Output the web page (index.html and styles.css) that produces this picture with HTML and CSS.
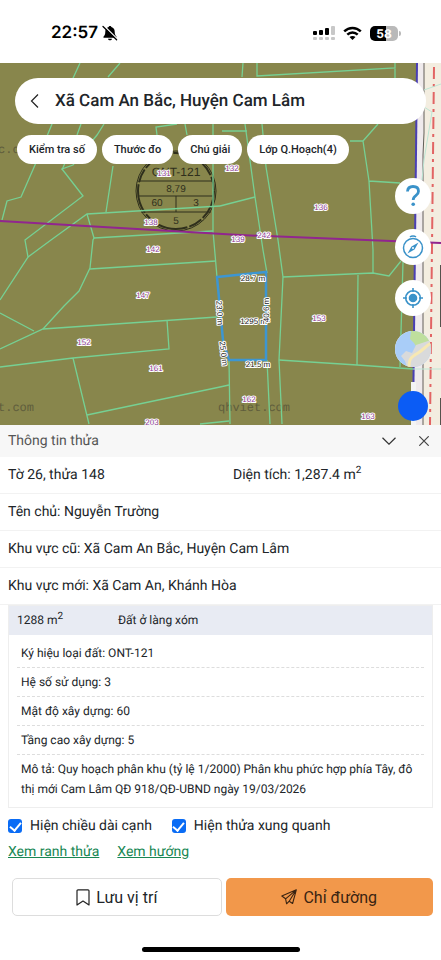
FILE: index.html
```html
<!DOCTYPE html>
<html lang="vi">
  <head>
    <meta charset="UTF-8" />
    <meta name="viewport" content="width=device-width, initial-scale=1.0" />
    <title>Thông tin thửa</title>
    <link rel="stylesheet" href="styles.css">
  </head>
  <body>
    <header class="status-bar">
      <div class="status-left">
        <span class="clock">22:57</span>
        <svg class="bell" width="16" height="16" viewBox="0 0 16 16">
          <path d="M8 1c-.8 0-1.300.5-1.400 1.100C4.400 2.700 3.300 4.500 3.300 6.800c0 2.600-.8 3.700-1.700 4.700-.5.600-.2 1.300.5 1.300h11.800c.7 0 1-.7.500-1.300-.9-1-1.700-2.100-1.700-4.700 0-2.300-1.100-4.100-3.300-4.700C9.300 1.500 8.800 1 8 1zM6 13.800h4c-.2 1-1 1.500-2 1.500s-1.800-.5-2-1.500z" />
          <path d="M2.500 1.200l13 13" stroke="#fff" stroke-width="1.500" />
          <path d="M1 1.500l13.600 13.300" stroke="#000" stroke-width="1.300" stroke-linecap="round" />
        </svg>
      </div>
      <div class="status-right">
        <svg width="22" height="16" viewBox="0 0 22 16">
          <g fill="#000">
            <rect x="0" y="6" width="4" height="4" rx="1" />
            <rect x="6" y="5" width="4" height="5" rx="1" />
            <rect x="12" y="3" width="4" height="7" rx="1" />
          </g>
          <g fill="#c8c8c8">
            <rect x="18" y="1" width="4" height="9" rx="1" />
            <rect x="0" y="12" width="4" height="3" rx="1" />
            <rect x="6" y="12" width="4" height="3" rx="1" />
            <rect x="12" y="12" width="4" height="3" rx="1" />
            <rect x="18" y="12" width="4" height="3" rx="1" />
          </g>
        </svg>
        <svg width="19" height="15" viewBox="0 0 19 15">
          <g fill="none" stroke="#000" stroke-width="2.500">
            <path d="M1.200 5.400C6 .8 13 .8 17.800 5.400" />
            <path d="M4.300 8.700c3-2.900 7.400-2.900 10.400 0" />
          </g>
          <path d="M9.500 14l-3-3c1.700-1.500 4.300-1.500 6 0z" />
        </svg>
        <div class="battery"><span>58</span></div>
      </div>
    </header>

    <main class="map">
      <svg class="map-canvas" viewBox="0 63 441 362" preserveAspectRatio="xMaxYMin slice">
        <rect x="0" y="63" width="441" height="362" fill="#f3ede0" />
        <polygon points="417,63 424,63 423,425 413,425" fill="#efeaec" />
        <polygon points="0,63 417,63 413,425 0,425" fill="#88864c" />

        <!-- 도로 -->
        <path d="M424 63v70l-1 22v270" stroke="#625f58" stroke-width="1" fill="none" />
        <path d="M441 265v62M441 398v27" stroke="#55524c" stroke-width="2" />
        <path d="M417 63L413 425" stroke="#4a3fb4" stroke-width="2" />
        <path d="M434 67L430 425" stroke="#e26464" stroke-width="2" stroke-dasharray="12 5 3 5" />
        <path d="M441 84l-17 6M424 107l8 5-8 48-2 20M413 369h28" stroke="#bde6d5" stroke-width="1" fill="none" />

        <!-- 워터마크 -->
        <g class="watermark">
          <text x="-2" y="153">c.com</text>
          <text x="-2" y="411">t.com</text>
          <text x="218" y="411">qhviet.com</text>
        </g>

        <!-- 토지 기호 -->
        <g class="zone">
          <circle cx="176" cy="191" r="40" stroke-width="1" />
          <circle cx="176" cy="191" r="38" stroke-width="2" stroke-dasharray="30 2 14 2" />
          <path d="M140 181h73M138 196h76M141 212h70M176 196v16" />
          <text x="176" y="176" class="zone-name">ONT-121</text>
          <text x="176" y="192">8,79</text>
          <text x="157" y="206">60</text>
          <text x="196" y="206">3</text>
          <text x="176" y="224">5</text>
        </g>

        <!-- 필지 경계 -->
        <g class="parcels">
          <path d="M80 63L52 124 35 165 21 197 7 201 2 220" />
          <path d="M120 63L108 77M81 124l-4 11-15 35" />
          <path d="M104 124l-7 11-24 30-11 4 21 27-58 44 3 17-28 43" />
          <path d="M28 257l23-17 36-26 133-8" />
          <path d="M113 166l-7 46M87 214l7 24-1 2-3 28-11 23-15 15-21 23" />
          <path d="M94 238l119-7M90 269l126-8" />
          <path d="M0 313l34 18M0 349l43-20 174-12" />
          <path d="M167 320l2 29-96 9-73 9M73 358l16 66M87 415l133-28 9-2M200 424l29-3" />
          <path d="M157 135l-1-8 21-3M185 124l2 11M213 124v107l4 46" />
          <path d="M243 63l-1 14M245 124l10 73 8 53 4 23M222 131h25" />
          <path d="M257 63v13l138-8V63M395 68v10" />
          <path d="M262 124l4 43 12 73 5 37-4 83 3 64" />
          <path d="M378 124l-15 17h-13M363 141l6 40 4 69v23M369 181l31 2" />
          <path d="M220 206l35-9M283 277l90-4 16 3 12-15M358 275l-1 90" />
          <path d="M279 360l78 5 56 4M403 262l-3 105M267 360l3 64M229 360l1 64" />
        </g>

        <path d="M0 221L240 235 441 243" stroke="#91258f" stroke-width="2" fill="none" />
        <path d="M217 277l49-5v88h-37l-6-20z" stroke="#3d96d2" stroke-width="2.500" fill="none" />

        <g class="numbers">
          <text x="164" y="176">131</text>
          <text x="232" y="171">132</text>
          <text x="321" y="210">136</text>
          <text x="151" y="225">138</text>
          <text x="238" y="242">139</text>
          <text x="264" y="238">242</text>
          <text x="153" y="252">142</text>
          <text x="143" y="298">147</text>
          <text x="84" y="345">152</text>
          <text x="156" y="371">161</text>
          <text x="319" y="321">153</text>
          <text x="249" y="402">162</text>
          <text x="368" y="419">163</text>
          <text x="152" y="425">203</text>
        </g>
        <g class="lengths">
          <text x="253" y="281">28.7 m</text>
          <text x="255" y="324">1295 m²</text>
          <text x="258" y="367">21.5 m</text>
          <text transform="translate(269 310) rotate(-90)">40.6 m</text>
          <text transform="translate(217 313) rotate(87)">23.0 m</text>
          <text transform="translate(221 354) rotate(83)">25.0 m</text>
        </g>
      </svg>

      <div class="map-top">
        <div class="search">
          <button class="back" aria-label="Quay lại">
            <svg width="10" height="16" viewBox="0 0 10 16"><path d="M8 1.500L1.500 8 8 14.500" fill="none" stroke="#222" stroke-width="1.200" /></svg>
          </button>
          <h1>Xã Cam An Bắc, Huyện Cam Lâm</h1>
        </div>
        <nav class="chips">
          <button>Kiểm tra số</button>
          <button>Thước đo</button>
          <button>Chú giải</button>
          <button>Lớp Q.Hoạch(4)</button>
        </nav>
      </div>

      <div class="tools">
        <button class="tool" aria-label="Trợ giúp">
          <svg width="20" height="24" viewBox="0 0 20 24"><path d="M4.500 7.500c.2-3.300 2.500-5 5.500-5 3.300 0 5.500 1.800 5.500 4.700 0 2.300-1.200 3.400-2.700 4.500C11 12.900 10.200 13.700 10.200 16" fill="none" stroke="#3a92c9" stroke-width="2.800" /><circle cx="10.200" cy="20.300" r="1.800" fill="#3a92c9" /></svg>
        </button>
        <button class="tool" aria-label="La bàn">
          <svg width="22" height="24" viewBox="0 0 22 24"><g fill="none" stroke="#3a92c9"><circle cx="11" cy="13" r="9.500" stroke-width="1.500" /><path d="M8 2c1.500-1.300 4.500-1.300 6 0" stroke-width="1.500" /></g><path d="M16.500 7.500l-4 7-7 4 4-7z" fill="#3a92c9" /><circle cx="11" cy="13" r="1" fill="#fff" /></svg>
        </button>
        <button class="tool" aria-label="Vị trí của tôi">
          <svg width="20" height="20" viewBox="0 0 20 20"><g fill="none" stroke="#3a92c9" stroke-width="1.600"><circle cx="10" cy="10" r="7.300" /><path d="M10 0v4M10 16v4M0 10h4M16 10h4" /></g><circle cx="10" cy="10" r="4.300" fill="#3a92c9" /></svg>
        </button>
        <button class="tool layers" aria-label="Lớp bản đồ">
          <svg width="36" height="36" viewBox="0 0 36 36">
            <rect width="36" height="36" fill="#a9cdf8" />
            <path d="M16 0h20v17L24 20l-5-8-4-4z" fill="#bfdf9d" />
            <path d="M6 25l5-5 6 2 4-8 15-5v27H12l-2-6z" fill="#d9dadb" />
            <path d="M14 36c0-8 2-10 9-14 5-3 8-7 13-10" fill="none" stroke="#f7e8b3" stroke-width="3" />
          </svg>
        </button>
        <div class="zoom">
          <input type="range" min="0" max="100" value="30" aria-label="Độ mờ" />
        </div>
      </div>
    </main>

    <section class="sheet">
      <div class="sheet-head">
        <h2>Thông tin thửa</h2>
        <button class="icon-btn" aria-label="Thu gọn">
          <svg width="14" height="8" viewBox="0 0 14 8"><path d="M.5.8L7 7.200 13.500.8" fill="none" stroke="#333" stroke-width="1.200" /></svg>
        </button>
        <button class="icon-btn" aria-label="Đóng">
          <svg width="10" height="10" viewBox="0 0 10 10"><path d="M.3.3l9.400 9.400M9.700.3L.3 9.700" stroke="#444" stroke-width="1.200" /></svg>
        </button>
      </div>
      <div class="row split">
        <span>Tờ 26, thửa 148</span>
        <span>Diện tích: 1,287.4 m<sup>2</sup></span>
      </div>
      <div class="row">Tên chủ: Nguyễn Trường</div>
      <div class="row">Khu vực cũ: Xã Cam An Bắc, Huyện Cam Lâm</div>
      <div class="row">Khu vực mới: Xã Cam An, Khánh Hòa</div>

      <div class="card">
        <div class="card-head">
          <span>1288 m<sup>2</sup></span>
          <span>Đất ở làng xóm</span>
        </div>
        <ul class="card-list">
          <li>Ký hiệu loại đất: ONT-121</li>
          <li>Hệ số sử dụng: 3</li>
          <li>Mật độ xây dựng: 60</li>
          <li>Tầng cao xây dựng: 5</li>
          <li>Mô tả: Quy hoạch phân khu (tỷ lệ 1/2000) Phân khu phức hợp phía Tây, đô thị mới Cam Lâm QĐ 918/QĐ-UBND ngày 19/03/2026</li>
        </ul>
      </div>

      <div class="checks">
        <label><input type="checkbox" checked />Hiện chiều dài cạnh</label>
        <label><input type="checkbox" checked />Hiện thửa xung quanh</label>
      </div>
      <div class="links">
        <a href="#">Xem ranh thửa</a>
        <a href="#">Xem hướng</a>
      </div>
      <div class="actions">
        <button class="btn save">
          <svg width="14" height="17" viewBox="0 0 14 17"><path d="M1 1.800Q1 .8 2 .8h10q1 0 1 1v14.200l-6-4-6 4z" fill="none" stroke="#222" stroke-width="1.200" stroke-linejoin="round" /></svg>
          Lưu vị trí
        </button>
        <button class="btn go">
          <svg width="16" height="16" viewBox="0 0 16 16"><path d="M15.300.8L.8 7l3.800 2.800 1 5 2.600-2.600 3.400 2.300zM15.300.8L4.600 9.800M15.300.8L8.200 12.200" fill="none" stroke="#3a2412" stroke-width="1.100" stroke-linejoin="round" /></svg>
          Chỉ đường
        </button>
      </div>
      <div class="home-bar"></div>
    </section>
  </body>
</html>
```
FILE: styles.css
```css
@charset 'utf-8';
* {
  margin: 0;
  padding: 0;
  box-sizing: border-box;
}

body {
  display: flex;
  flex-direction: column;
  min-height: 100vh;
  font-family: Roboto, "Liberation Sans", sans-serif;
  font-size: 14px;
  color: #212529;
  background: #fff;
  text-rendering: geometricPrecision;
}
button {
  border: 0;
  background: #fff;
  font-family: inherit;
  color: #212529;
  cursor: pointer;
}
ul {
  list-style: none;
}
svg {
  display: block;
}
sup {
  font-size: 10px;
  line-height: 0;
}

/* status bar */
.status-bar {
  display: flex;
  justify-content: space-between;
  align-items: center;
  height: 63px;
  padding: 3px 43px 0 51px;
}
.status-left,
.status-right {
  display: flex;
  align-items: center;
}
.status-left {
  gap: 4px;
}
.status-right {
  gap: 8px;
}
.clock {
  font-family: Inter, sans-serif;
  font-size: 17px;
  font-weight: 600;
  color: #000;
}
.battery {
  position: relative;
  width: 28px;
  height: 15px;
  border-radius: 5px;
  background: linear-gradient(90deg, #000 58%, #b9b9b9 58%);
  color: #fff;
  font: 700 12px/15px Inter, sans-serif;
  text-align: center;
}
.battery::after {
  content: "";
  position: absolute;
  top: 5px;
  right: -3px;
  width: 2px;
  height: 5px;
  border-radius: 0 2px 2px 0;
  background: #b9b9b9;
}

/* map */
.map {
  position: relative;
  flex: 1;
  min-height: 360px;
  overflow: hidden;
}
.map-canvas {
  position: absolute;
  width: 100%;
  height: 100%;
}
.watermark {
  font: 12px "Liberation Mono", monospace;
  fill: #5f5d3c;
}
.zone {
  fill: none;
  stroke: #2f2f1c;
}
.zone text {
  font: 10px "Liberation Sans", sans-serif;
  fill: #2f2f1c;
  stroke: none;
  text-anchor: middle;
}
.zone .zone-name {
  font-size: 12px;
}
.parcels {
  fill: none;
  stroke: #76d093;
  stroke-width: 1.3;
}
.numbers,
.lengths {
  font: 8px "Liberation Sans", sans-serif;
  text-anchor: middle;
  paint-order: stroke;
  stroke: #fff;
  stroke-width: 2;
  stroke-linejoin: round;
}
.numbers {
  fill: #8b3a93;
}
.lengths {
  fill: #222;
}

.map-top {
  position: relative;
  padding: 15px 15px 0;
}
.search {
  display: flex;
  align-items: center;
  height: 46px;
  padding-left: 15px;
  border-radius: 23px;
  background: #fff;
}
.back {
  display: flex;
  width: 25px;
}
.search h1 {
  font-size: 17px;
  font-weight: 500;
}
.chips {
  display: flex;
  gap: 5px;
  padding: 11px 2px 0;
}
.chips button {
  height: 29px;
  padding: 0 12px;
  border-radius: 15px;
  font-size: 11px;
  font-weight: 500;
  white-space: nowrap;
}

.tools {
  position: absolute;
  top: 115px;
  right: 10px;
  display: flex;
  flex-direction: column;
  gap: 15px;
}
.tool {
  display: flex;
  align-items: center;
  justify-content: center;
  width: 36px;
  height: 36px;
  border-radius: 50%;
  overflow: hidden;
}
.zoom {
  display: flex;
  justify-content: center;
}
.zoom input {
  appearance: none;
  writing-mode: vertical-lr;
  width: 30px;
  height: 60px;
  background: linear-gradient(#f4f4f4, #f4f4f4) center / 5px 100% no-repeat;
}
.zoom input::-webkit-slider-thumb {
  appearance: none;
  width: 30px;
  height: 30px;
  border-radius: 50%;
  background: #0b5cf5;
}

/* sheet */
.sheet-head {
  display: flex;
  align-items: center;
  height: 32px;
  padding-left: 8px;
  background: #f7f7f7;
}
.sheet-head h2 {
  flex: 1;
  font-size: 14px;
  font-weight: 400;
  color: #555;
}
.icon-btn {
  display: flex;
  align-items: center;
  justify-content: center;
  width: 35px;
  height: 32px;
  background: none;
}
.row {
  padding: 8px;
  line-height: 20px;
  border-bottom: 1px solid #f2f2f2;
}
.split {
  display: grid;
  grid-template-columns: 225px 1fr;
}
.card {
  margin: 0 8px;
  border: 1px solid #eee;
  font-size: 12px;
}
.card-head {
  display: grid;
  grid-template-columns: 101px 1fr;
  padding: 0 8px;
  line-height: 29px;
  background: #e8ebf3;
}
.card-list {
  padding: 4px 8px;
}
.card-list li {
  padding: 4px;
  line-height: 20px;
  border-bottom: 1px dashed #ddd;
}
.card-list li:last-child {
  border: 0;
}
.checks {
  display: flex;
  gap: 20px;
  padding: 7px 8px 0;
}
.checks label {
  display: flex;
  align-items: center;
  gap: 8px;
  line-height: 22px;
}
.checks input {
  appearance: none;
  width: 14px;
  height: 14px;
  border-radius: 3px;
  background: #0a6cf5;
}
.checks input:checked::before {
  content: "";
  display: block;
  width: 5px;
  height: 9px;
  margin: 1px auto 0;
  border: solid #fff;
  border-width: 0 2px 2px 0;
  transform: rotate(40deg);
}
.links {
  display: flex;
  gap: 18px;
  padding: 4px 8px 0;
  line-height: 22px;
}
.links a {
  color: #198754;
}
.actions {
  display: flex;
  gap: 4px;
  padding: 15px 8px 0 12px;
}
.btn {
  display: flex;
  flex: 1;
  align-items: center;
  justify-content: center;
  gap: 6px;
  height: 38px;
  border-radius: 5px;
  font-size: 16px;
}
.save {
  border: 1px solid #ddd;
}
.go {
  background: #f2984b;
  color: #3a2412;
}
.home-bar {
  width: 158px;
  height: 5px;
  margin: 31px auto 8px;
  border-radius: 3px;
  background: #000;
}
```
